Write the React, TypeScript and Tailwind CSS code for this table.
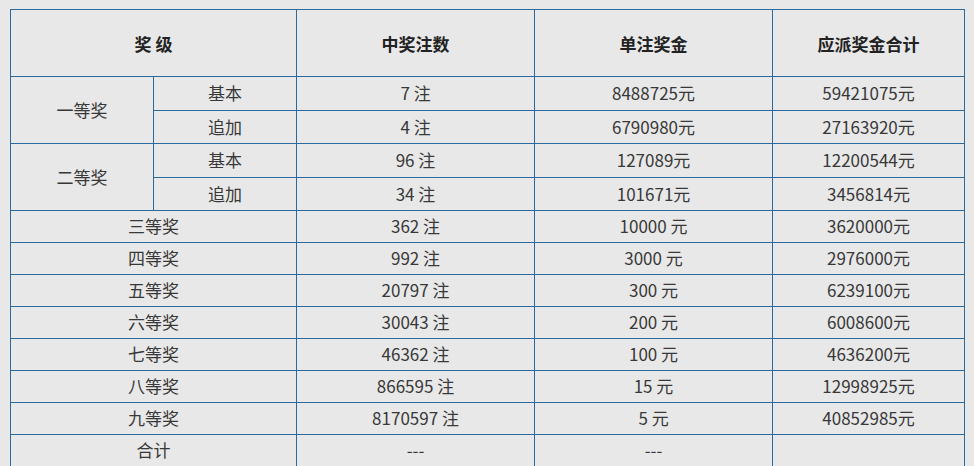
import React from "react";

const rows: [string, string, string, string][] = [
  ["三等奖", "362 注", "10000 元", "3620000元"],
  ["四等奖", "992 注", "3000 元", "2976000元"],
  ["五等奖", "20797 注", "300 元", "6239100元"],
  ["六等奖", "30043 注", "200 元", "6008600元"],
  ["七等奖", "46362 注", "100 元", "4636200元"],
  ["八等奖", "866595 注", "15 元", "12998925元"],
  ["九等奖", "8170597 注", "5 元", "40852985元"],
  ["合计", "---", "---", ""],
];

const td = "border border-[#2a6a9e] text-center align-middle p-0 pb-[2px]";
const th = "border border-[#2a6a9e] text-center align-middle p-0";

export default function App() {
  return (
    <div
      className="w-[974px] h-[466px] overflow-hidden bg-[#e8e8e8] pl-[10px] pt-[9px] text-[#383838] text-[17px] leading-none"
      style={{ fontFamily: '"Microsoft YaHei", "Noto Sans CJK SC", sans-serif' }}
    >
      <table className="table-fixed border-collapse w-[954px]">
        <colgroup>
          <col className="w-[143px]" />
          <col className="w-[143px]" />
          <col className="w-[238px]" />
          <col className="w-[238px]" />
          <col className="w-[192px]" />
        </colgroup>
        <tbody>
          <tr className="h-[67px] font-bold text-[17px] text-[#222]">
            <td colSpan={2} className={th}>奖 级</td>
            <td className={th}>中奖注数</td>
            <td className={th}>单注奖金</td>
            <td className={th}>应派奖金合计</td>
          </tr>
          <tr className="h-[34px]">
            <td rowSpan={2} className={td}>一等奖</td>
            <td className={td}>基本</td>
            <td className={td}>7 注</td>
            <td className={td}>8488725元</td>
            <td className={td}>59421075元</td>
          </tr>
          <tr className="h-[33px]">
            <td className={td}>追加</td>
            <td className={td}>4 注</td>
            <td className={td}>6790980元</td>
            <td className={td}>27163920元</td>
          </tr>
          <tr className="h-[34px]">
            <td rowSpan={2} className={td}>二等奖</td>
            <td className={td}>基本</td>
            <td className={td}>96 注</td>
            <td className={td}>127089元</td>
            <td className={td}>12200544元</td>
          </tr>
          <tr className="h-[33px]">
            <td className={td}>追加</td>
            <td className={td}>34 注</td>
            <td className={td}>101671元</td>
            <td className={td}>3456814元</td>
          </tr>
          {rows.map((r) => (
            <tr key={r[0]} className="h-[32px]">
              <td colSpan={2} className={td}>{r[0]}</td>
              <td className={td}>{r[1]}</td>
              <td className={td}>{r[2]}</td>
              <td className={td}>{r[3]}</td>
            </tr>
          ))}
        </tbody>
      </table>
    </div>
  );
}
